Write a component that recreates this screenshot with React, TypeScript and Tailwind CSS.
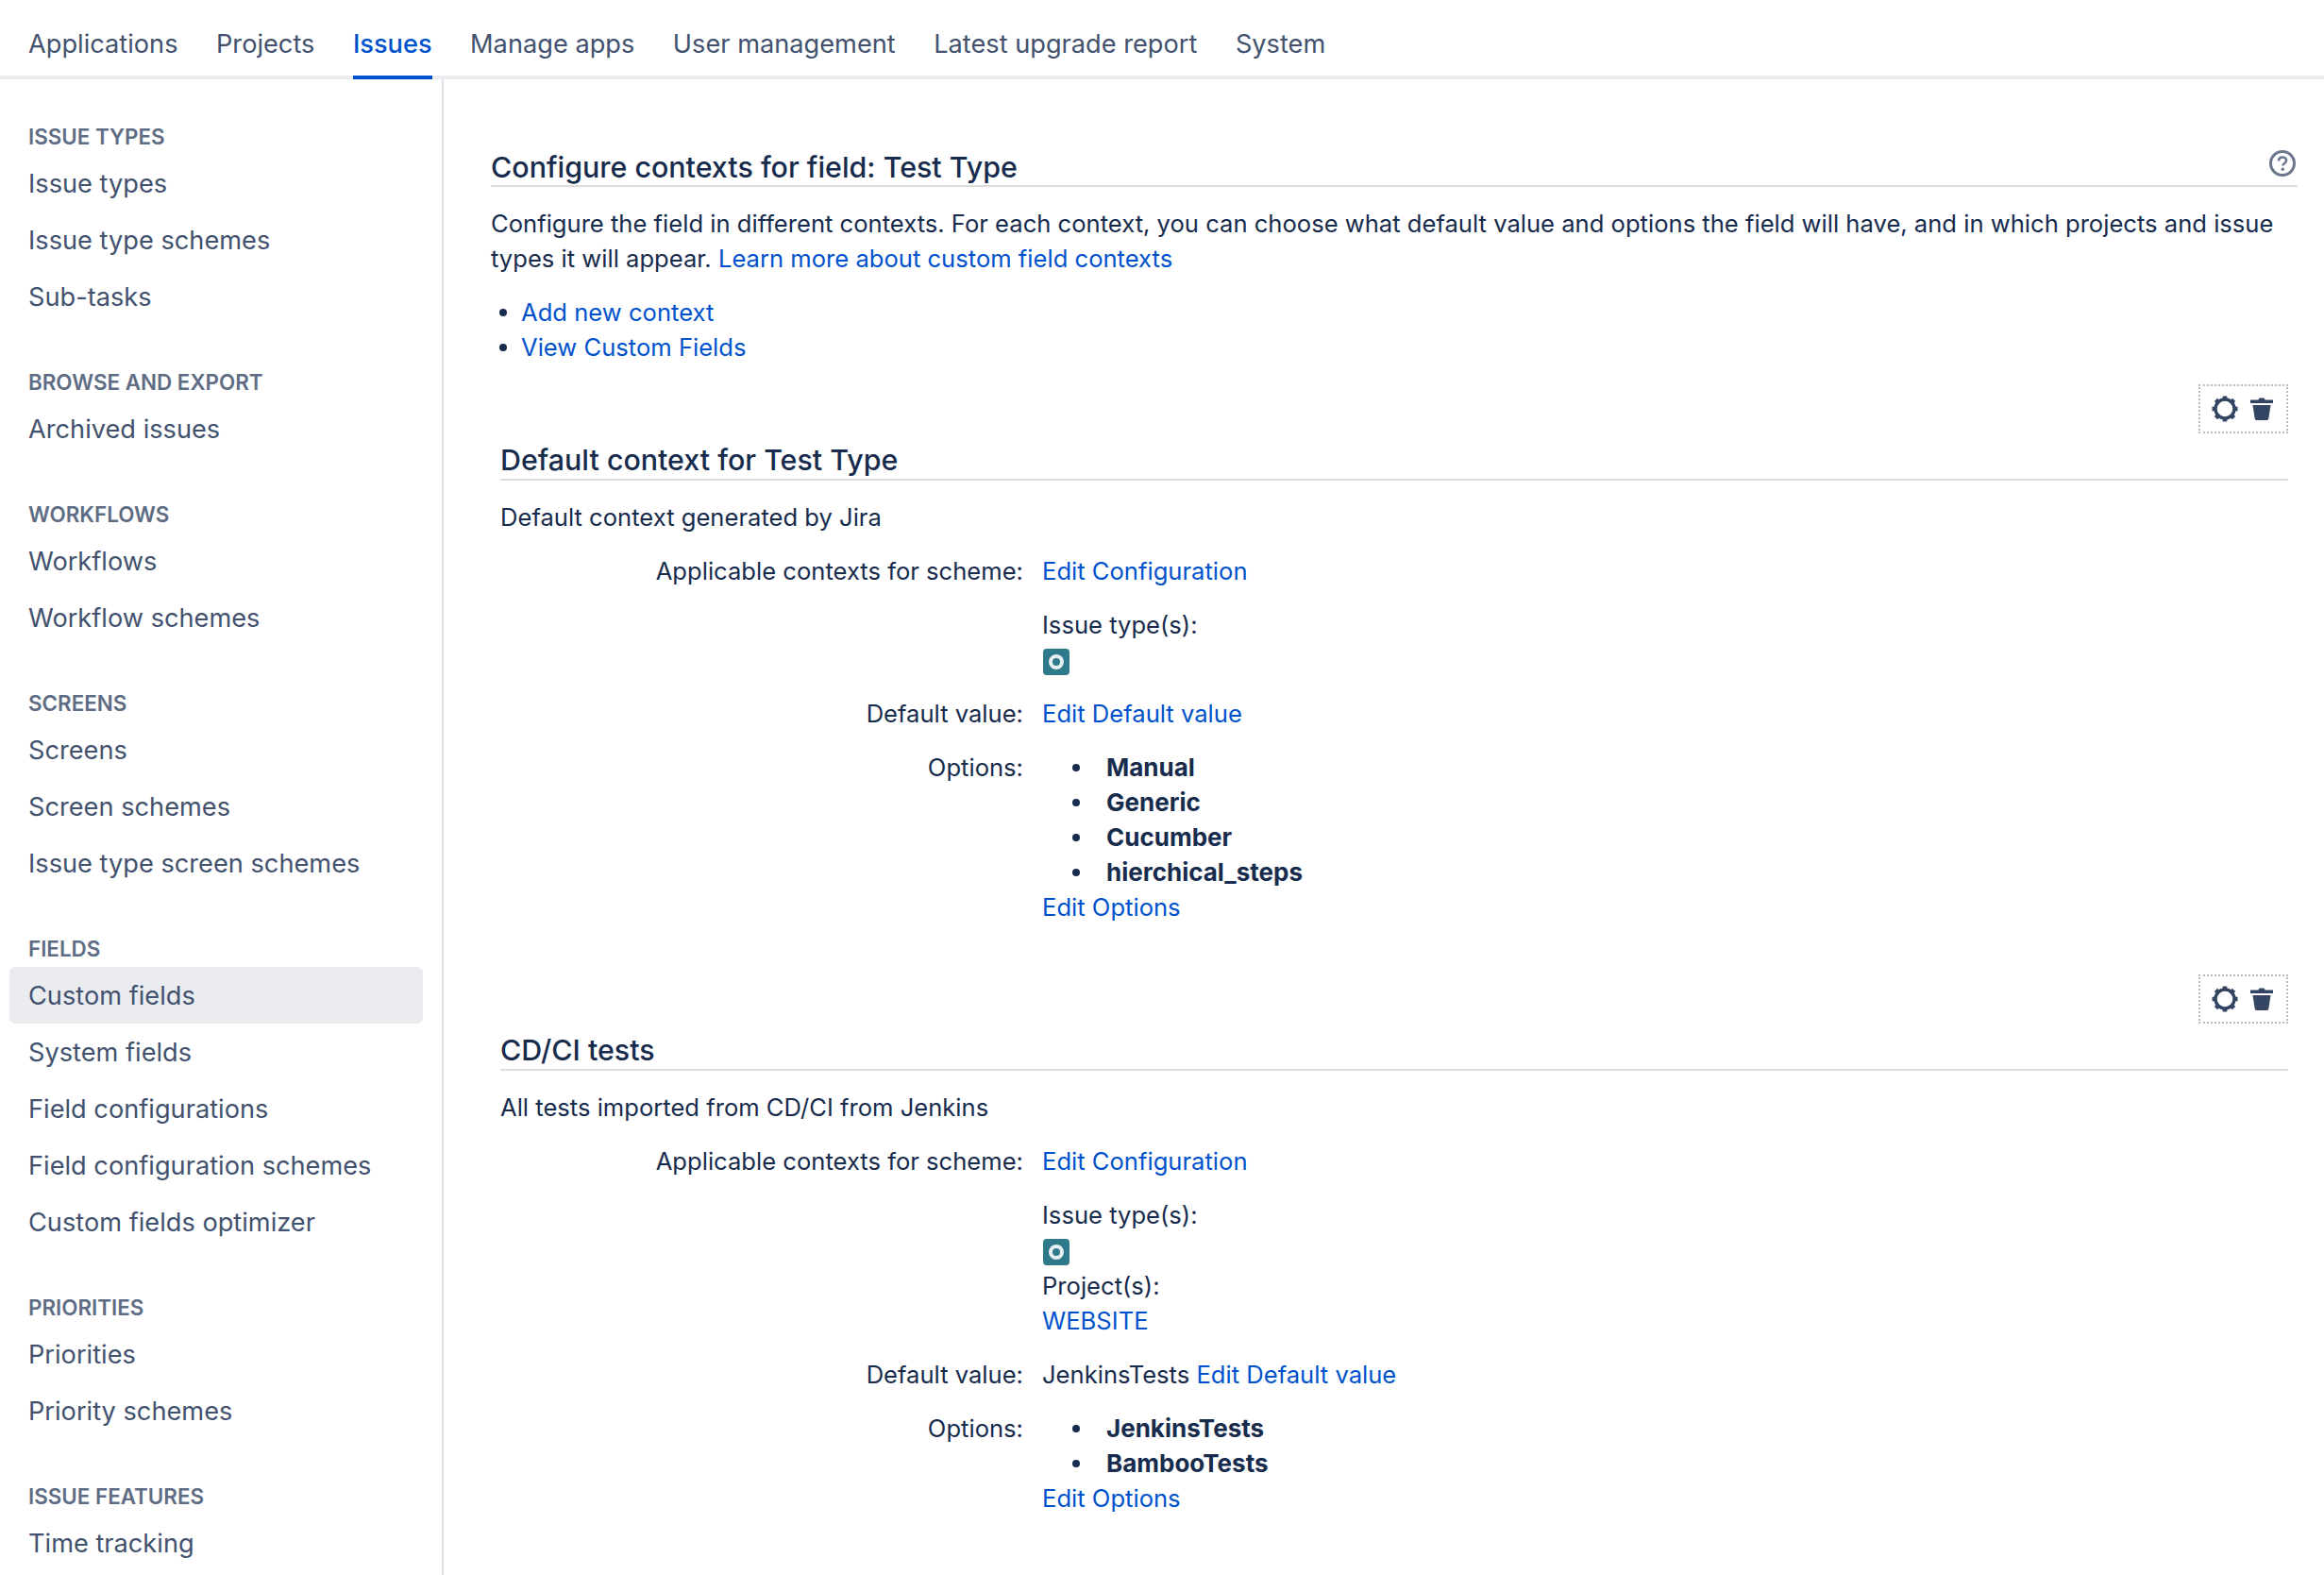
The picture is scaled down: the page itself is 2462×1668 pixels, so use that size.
const tabs = ['Applications', 'Projects', 'Issues', 'Manage apps', 'User management', 'Latest upgrade report', 'System'];

const sections = [
  { title: 'ISSUE TYPES', items: ['Issue types', 'Issue type schemes', 'Sub-tasks'] },
  { title: 'BROWSE AND EXPORT', items: ['Archived issues'] },
  { title: 'WORKFLOWS', items: ['Workflows', 'Workflow schemes'] },
  { title: 'SCREENS', items: ['Screens', 'Screen schemes', 'Issue type screen schemes'] },
  { title: 'FIELDS', items: ['Custom fields', 'System fields', 'Field configurations', 'Field configuration schemes', 'Custom fields optimizer'] },
  { title: 'PRIORITIES', items: ['Priorities', 'Priority schemes'] },
  { title: 'ISSUE FEATURES', items: ['Time tracking'] },
];

function GearIcon() {
  return (
    <svg width="28" height="28" viewBox="0 0 28 28" fill="none">
      <circle cx="14" cy="14" r="10" stroke="#344563" strokeWidth="3.4" />
      <g stroke="#344563" strokeWidth="4.6">
        <path d="M14 0.500v4" />
        <path d="M14 23.500v4" />
        <path d="M0.500 14h4" />
        <path d="M23.500 14h4" />
        <path d="M4.450 4.450l2.800 2.800" />
        <path d="M20.750 20.750l2.800 2.800" />
        <path d="M4.450 23.550l2.800-2.800" />
        <path d="M20.750 7.250l2.800-2.800" />
      </g>
    </svg>
  );
}

function TrashIcon() {
  return (
    <svg width="24" height="24" viewBox="0 0 24 24" fill="#344563">
      <path d="M0 2.500h8.500c.3-1.600 1-2 1.700-2h3.600c.7 0 1.400.4 1.700 2H24v3.500H0z" />
      <path d="M2.500 8h19l-2.200 14.200c-.2 1-.8 1.800-2 1.800H6.700c-1.200 0-1.800-.8-2-1.800z" />
    </svg>
  );
}

function IssueTypeIcon() {
  return (
    <div className="h-[37px] pt-[7px] pl-[1px]">
      <div className="flex h-[28px] w-[28px] items-center justify-center rounded-[4px] bg-[#2f7a8a]">
        <div className="h-[16px] w-[16px] rounded-full border-[4px] border-[#e6f0f2]" />
      </div>
    </div>
  );
}

function Bullet({ className }: { className: string }) {
  return <span className={`h-[8px] w-[8px] shrink-0 rounded-full bg-[#172b4d] ${className}`} />;
}

function Link({ children }: { children: React.ReactNode }) {
  return <a className="text-[#0052cc]">{children}</a>;
}

function Row({ label, children }: { label?: string; children: React.ReactNode }) {
  return (
    <div className="mt-[20px] flex">
      <div className="w-[554px] shrink-0 text-right">{label}</div>
      <div className="ml-[20px]">{children}</div>
    </div>
  );
}

function ContextBlock({
  title,
  description,
  project,
  defaultValue,
  options,
}: {
  title: string;
  description: string;
  project?: string;
  defaultValue?: string;
  options: string[];
}) {
  return (
    <div className="px-[10px]">
      <div className="flex justify-end">
        <div className="flex h-[52px] w-[95px] items-center gap-[13px] border-2 border-dotted border-[#bbbbbb] pl-[12px]">
          <GearIcon />
          <TrashIcon />
        </div>
      </div>
      <h2 className="mt-[8px] h-[42px] border-b-2 border-[#dddddd] text-[30.4px] leading-[40px] font-medium text-[#172b4d]">{title}</h2>
      <p className="mt-[20px]">{description}</p>
      <Row label="Applicable contexts for scheme:">
        <Link>Edit Configuration</Link>
      </Row>
      <Row>
        <div>Issue type(s):</div>
        <IssueTypeIcon />
        {project && (
          <>
            <div className="mt-[1px]">Project(s):</div>
            <Link>{project}</Link>
          </>
        )}
      </Row>
      <Row label="Default value:">
        {defaultValue && <span>{defaultValue} </span>}
        <Link>Edit Default value</Link>
      </Row>
      <Row label="Options:">
        <ul>
          {options.map((o) => (
            <li key={o} className="flex items-center text-[26px] font-bold">
              <Bullet className="mr-[28px] ml-[32px]" />
              {o}
            </li>
          ))}
        </ul>
        <Link>Edit Options</Link>
      </Row>
    </div>
  );
}

export default function App() {
  return (
    <div className="flex h-screen flex-col overflow-hidden bg-white font-['Inter',sans-serif] text-[25.6px] leading-[37px] text-[#172b4d]">
      {/* Top tabs */}
      <nav className="flex h-[84px] shrink-0 gap-[40.5px] border-b-4 border-[#ebecf0] px-[30px] text-[27.2px]">
        {tabs.map((t) => (
          <div
            key={t}
            className={
              t === 'Issues'
                ? 'flex h-[84px] items-center border-b-4 border-[#0052cc] pt-[12px] font-medium text-[#0052cc]'
                : 'flex h-[84px] items-center pt-[12px] pb-[4px] text-[#42526e]'
            }
          >
            {t}
          </div>
        ))}
      </nav>

      <div className="flex min-h-0 flex-1">
        {/* Sidebar */}
        <aside className="w-[470px] shrink-0 border-r-2 border-[#dfe1e6] pt-[40px] pr-[20px] pl-[10px]">
          {sections.map((s) => (
            <div key={s.title} className="mb-[40px]">
              <div className="flex h-[40px] items-center pl-[20px] text-[22.4px] font-semibold text-[#5e6c84]">{s.title}</div>
              {s.items.map((item) => (
                <div
                  key={item}
                  className={
                    item === 'Custom fields'
                      ? 'flex h-[60px] items-center rounded-[6px] bg-[#ebecf0] pl-[20px] text-[27.2px] text-[#42526e]'
                      : 'flex h-[60px] items-center pl-[20px] text-[27.2px] text-[#42526e]'
                  }
                >
                  {item}
                </div>
              ))}
            </div>
          ))}
        </aside>

        {/* Main content */}
        <main className="min-w-0 flex-1 pt-[72px] pr-[28px] pl-[50px]">
          <div className="flex h-[42px] justify-between border-b-2 border-[#dddddd]">
            <h1 className="pt-[1px] text-[30.4px] leading-[40px] font-medium">Configure contexts for field: Test Type</h1>
            <svg width="28" height="28" viewBox="0 0 28 28" fill="none" className="mt-[3px] mr-[2px]">
              <circle cx="14" cy="14" r="12.500" stroke="#6b778c" strokeWidth="3" />
              <path d="M10 11.500c0-2.500 1.800-4 4.100-4 2.300 0 4 1.500 4 3.500 0 3-3.700 3-3.700 5.500" stroke="#6b778c" strokeWidth="2.600" />
              <circle cx="14.300" cy="20.300" r="1.700" fill="#6b778c" />
            </svg>
          </div>
          <p className="mt-[20px]">
            Configure the field in different contexts. For each context, you can choose what default value and options the field will have, and in which projects and issue types it will appear.{' '}
            <Link>Learn more about custom field contexts</Link>
          </p>
          <ul className="mt-[20px] mb-[21px]">
            <li className="flex items-center">
              <Bullet className="mr-[15px] ml-[9px]" />
              <Link>Add new context</Link>
            </li>
            <li className="flex items-center">
              <Bullet className="mr-[15px] ml-[9px]" />
              <Link>View Custom Fields</Link>
            </li>
          </ul>
          <ContextBlock
            title="Default context for Test Type"
            description="Default context generated by Jira"
            options={['Manual', 'Generic', 'Cucumber', 'hierchical_steps']}
          />
          <div className="h-[53px]" />
          <ContextBlock
            title="CD/CI tests"
            description="All tests imported from CD/CI from Jenkins"
            project="WEBSITE"
            defaultValue="JenkinsTests"
            options={['JenkinsTests', 'BambooTests']}
          />
        </main>
      </div>
    </div>
  );
}
